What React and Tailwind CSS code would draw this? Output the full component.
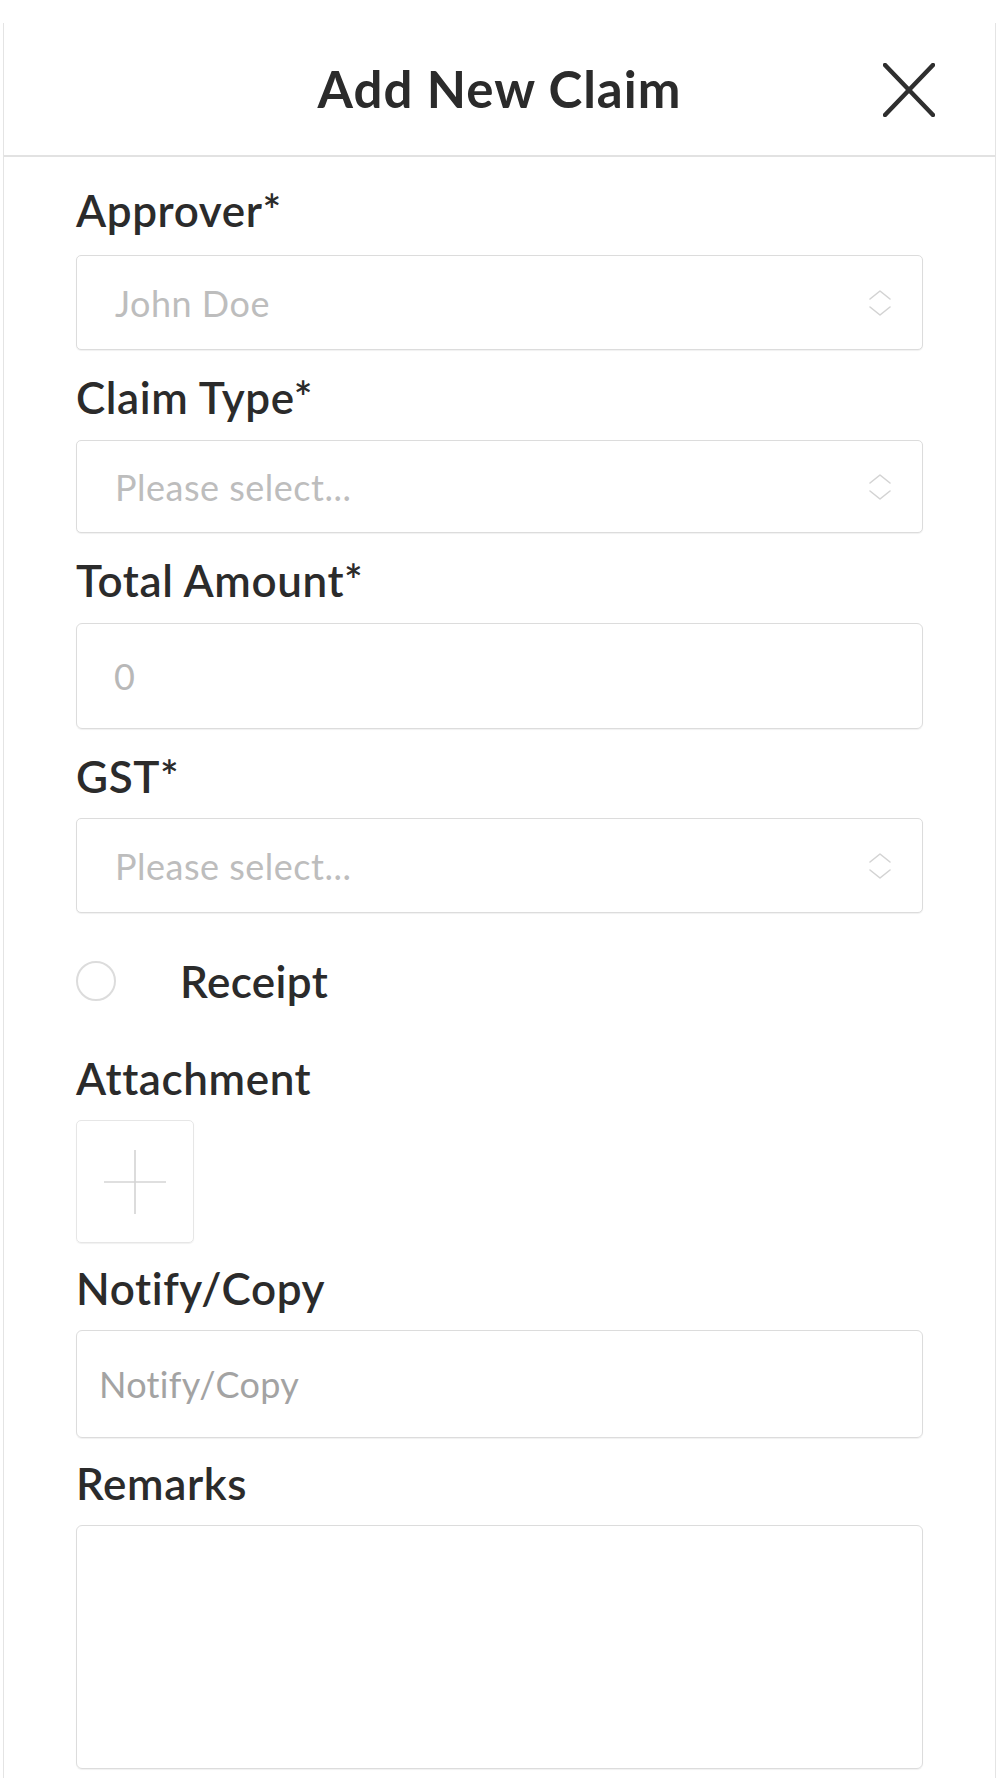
import React from 'react';

function Chevrons() {
  return (
    <svg width="24" height="28" viewBox="0 0 24 28" fill="none" stroke="#d3d3d3" strokeWidth="1.6" strokeLinecap="round" strokeLinejoin="round">
      <polyline points="2,10 12,2 22,10" />
      <polyline points="2,18 12,26 22,18" />
    </svg>
  );
}

function Label({ children, className = 'h-[89px] pt-[4px]' }) {
  return (
    <div className={`${className} flex items-center text-[44px] font-semibold text-[#2b2b2b] tracking-[0.6px]`}>
      {children}
    </div>
  );
}

function SelectBox({ value, className = 'h-[95px]' }) {
  return (
    <div className={`${className} flex items-center justify-between pl-[38px] pr-[30px] border border-[#dcdcdc] rounded-[5px] shadow-[0_1px_1px_rgba(0,0,0,0.06)] bg-white`}>
      <span className="text-[36px] text-[#bdbdbd] tracking-[0.5px]">{value}</span>
      <Chevrons />
    </div>
  );
}

export default function App() {
  return (
    <div className="min-h-[1778px] bg-white pt-[23px]" style={{ fontFamily: 'Lato, "Open Sans", sans-serif' }}>
      <div className="ml-[3px] w-[993px] min-h-[1755px] border-l border-r border-[#e4e4e4]">
        <div className="h-[134px] flex items-center justify-center relative border-b-2 border-[#e2e2e2]">
          <h1 className="text-[51px] font-bold text-[#2b2b2b] tracking-[1px]">Add New Claim</h1>
          <button className="absolute right-[60px] top-[40px]">
            <svg width="52" height="54" viewBox="0 0 52 54" fill="none" stroke="#2f2f2f" strokeWidth="4.5" strokeLinecap="round">
              <line x1="2" y1="2" x2="50" y2="52" />
              <line x1="50" y1="2" x2="2" y2="52" />
            </svg>
          </button>
        </div>

        <div className="px-[72px]">
          <Label className="h-[98px] pt-[8px]">Approver*</Label>
          <SelectBox value="John Doe" />

          <Label className="h-[90px] pt-[4px]">Claim Type*</Label>
          <SelectBox value="Please select..." className="h-[93px]" />

          <Label className="h-[90px] pt-[4px]">Total Amount*</Label>
          <div className="h-[106px] flex items-center pl-[37px] border border-[#dcdcdc] rounded-[6px] shadow-[0_1px_1px_rgba(0,0,0,0.06)]">
            <span className="text-[36px] text-[#b8b8b8]">0</span>
          </div>

          <Label>GST*</Label>
          <SelectBox value="Please select..." />

          <div className="mt-[47px] h-[42px] flex items-center">
            <span className="w-[40px] h-[40px] rounded-full border-2 border-[#dcdcdc]"></span>
            <span className="ml-[64px] text-[44px] font-semibold text-[#2b2b2b] tracking-[0.4px]">Receipt</span>
          </div>
          <div className="h-[29px]"></div>

          <Label>Attachment</Label>
          <div className="w-[118px] h-[123px] flex items-center justify-center border border-[#e6e6e6] rounded-[5px] shadow-[0_1px_1px_rgba(0,0,0,0.06)]">
            <svg width="62" height="64" viewBox="0 0 62 64" stroke="#d4d4d4" strokeWidth="1.6">
              <line x1="31" y1="0" x2="31" y2="64" />
              <line x1="0" y1="32" x2="62" y2="32" />
            </svg>
          </div>

          <Label className="h-[87px] pt-[2px]">Notify/Copy</Label>
          <div className="h-[108px] flex items-center pl-[22px] border border-[#dcdcdc] rounded-[6px] shadow-[0_1px_1px_rgba(0,0,0,0.06)]">
            <span className="text-[36px] text-[#a3a3a3] tracking-[0.3px]">Notify/Copy</span>
          </div>

          <Label className="h-[87px] pt-[2px]">Remarks</Label>
          <div className="h-[244px] border border-[#dcdcdc] rounded-[6px] shadow-[0_1px_1px_rgba(0,0,0,0.06)]"></div>
        </div>
      </div>
    </div>
  );
}
